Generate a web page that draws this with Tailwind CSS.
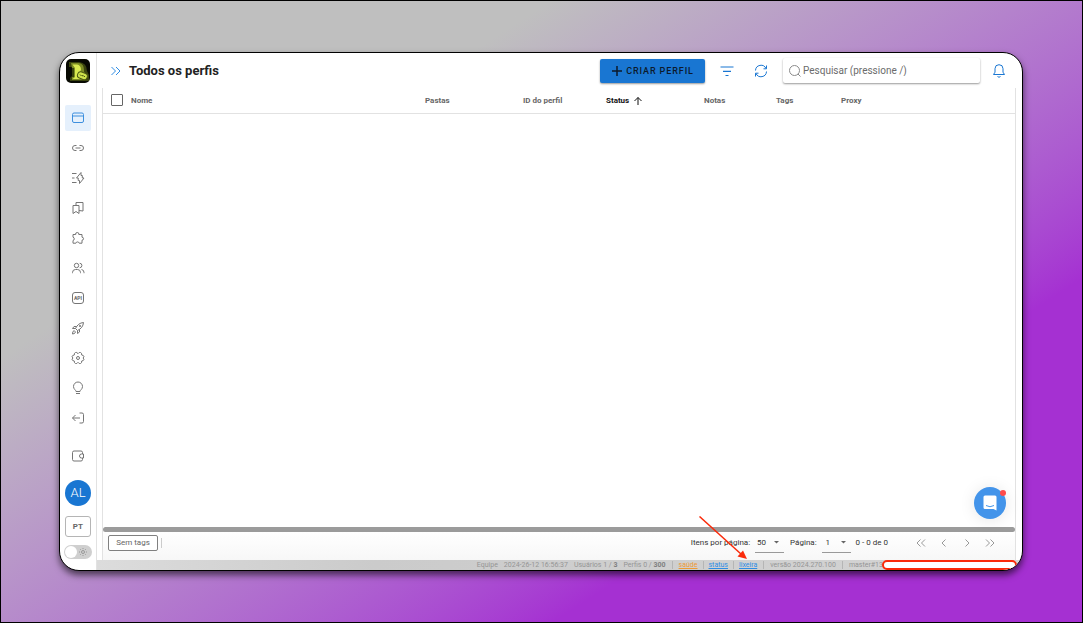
<!DOCTYPE html>
<html lang="pt-BR">
<head>
<meta charset="utf-8">
<meta name="viewport" content="width=device-width, initial-scale=1">
<title>Todos os perfis</title>
<script src="https://cdn.jsdelivr.net/npm/@tailwindcss/browser@4"></script>
</head>
<body class="flex h-screen border border-black bg-linear-147 from-[#bfbfbf] from-27% to-[#a530d2] to-74% py-[51px] pr-[59px] pl-[58px] font-['Roboto',sans-serif] text-[8px] leading-[10px] text-[#333]">
<div class="flex min-w-0 flex-1 overflow-hidden rounded-[20px] border border-black bg-white shadow-[0_4px_7px_rgba(0,0,0,0.6)]">

  <nav aria-label="Principal" class="flex w-[37px] shrink-0 flex-col items-center border-r border-[#e2e2e2] pt-1.5 text-[#757575]">
    <svg class="size-6 shrink-0" viewBox="0 0 24 24"><rect width="24" height="24" rx="5" fill="#080a02"/><path d="M3 3h10q8 1 8 9l2 4v6H4v-3l2-2V8H3z" fill="#3a440e"/><path d="M5 4h8q5 1 5 7v2l4 4-3 4H6v-3h2V9H6z" fill="#7c8d24"/><path d="M6.500 5.500H11q4 .5 4 5.500l-2 3 2 6H6.500L9 18V9z" fill="#d9ea50"/><rect x="11.500" y="13.500" width="10" height="6.500" rx="3" transform="rotate(22 16.500 16.500)" fill="#cfe34b" stroke="#4b5713"/><path d="M14 15.500l1.500 1.500m.5-1l1 1.500m.5-1l1.500 1.500" stroke="#4b5713" fill="none"/></svg>
    <div class="mt-[22px] flex flex-col items-center gap-1">
      <a href="#" aria-label="Perfis" class="flex size-[26px] items-center justify-center rounded-xs bg-[#e5f0fc] text-[#3d8fde]"><svg class="size-4" viewBox="0 0 16 16" fill="none" stroke="currentColor"><rect x="2.500" y="3" width="11" height="9.500" rx="1.500"/><path d="M2.500 6h11"/></svg></a>
      <a href="#" aria-label="Proxies" class="flex size-[26px] items-center justify-center"><svg class="size-4" viewBox="0 0 16 16" fill="none" stroke="currentColor"><path d="M6.500 5.500H5a2.500 2.500 0 0 0 0 5h1.500M9.500 5.500H11a2.500 2.500 0 0 1 0 5H9.500M5.500 8h5"/></svg></a>
      <a href="#" aria-label="Automação" class="flex size-[26px] items-center justify-center"><svg class="size-4" viewBox="0 0 16 16" fill="none" stroke="currentColor" stroke-linejoin="round"><path d="M2 3.500h4.500M2 8h2.500M2 12.500h4.500M11 2.500L6.500 8h1.700v2.500h1.300v3L14 8h-1.700V5.500H11z"/></svg></a>
      <a href="#" aria-label="Favoritos" class="flex size-[26px] items-center justify-center"><svg class="size-4" viewBox="0 0 16 16" fill="none" stroke="currentColor" stroke-linejoin="round"><path d="M3 5.500h6v8L6 11.500l-3 2zM6 5.500v-3h7v8.500l-4-.5"/></svg></a>
      <a href="#" aria-label="Extensões" class="flex size-[26px] items-center justify-center"><svg class="size-4" viewBox="0 0 16 16" fill="none" stroke="currentColor" stroke-linejoin="round"><path d="M3 4.500h2.700a1.600 1.600 0 1 1 3.100 0H12v2.700a1.500 1.500 0 1 1 0 3v3H9.200a1.700 1.700 0 0 0-3.300 0H3V10.500a1.700 1.700 0 0 0 0-3.300z"/></svg></a>
      <a href="#" aria-label="Equipe" class="flex size-[26px] items-center justify-center"><svg class="size-4" viewBox="0 0 16 16" fill="none" stroke="currentColor"><circle cx="6.500" cy="5.500" r="2.200"/><path d="M9.700 3.300a2.200 2.200 0 1 1 0 4.400M2.500 13.200v-.7a3 3 0 0 1 3-3h2a3 3 0 0 1 3 3v.7M11.500 9.500a3 3 0 0 1 2.500 3v.7"/></svg></a>
      <a href="#" aria-label="API" class="flex size-[26px] items-center justify-center"><svg class="size-4" viewBox="0 0 16 16" fill="none" stroke="currentColor"><rect x="2.500" y="2.500" width="11" height="11" rx="2.500"/><text x="8" y="9.800" text-anchor="middle" font-size="5" font-weight="900" fill="currentColor" stroke="none">API</text></svg></a>
      <a href="#" aria-label="Início rápido" class="flex size-[26px] items-center justify-center"><svg class="size-4" viewBox="0 0 16 16" fill="none" stroke="currentColor" stroke-linejoin="round"><path d="M5.500 8.500Q8 3 13.500 2.500 13 8 7.500 10.500zM6.500 6.500H4L2.500 8.500l3 0M9.500 9.500V12l-2 1.500v-3M4 10.500l1.500 1.500-1 1.500-2 .5.300-2z"/><circle cx="10" cy="6" r=".7"/></svg></a>
      <a href="#" aria-label="Configurações" class="flex size-[26px] items-center justify-center"><svg class="size-4" viewBox="0 0 16 16" fill="none" stroke="currentColor" stroke-linejoin="round"><path d="M5.500 2.500h1.300L8 3.700l1.200-1.200h1.300l1 .8.200 1.700 1.600.5.700 1.300L13 8l1 1.200-.7 1.300-1.600.5-.2 1.700-1 .8H9.200L8 12.300l-1.200 1.200H5.500l-1-.8-.2-1.700-1.600-.5L2 9.200 3 8 2 6.800l.7-1.300L4.300 5l.2-1.700z"/><circle cx="8" cy="8" r="1.500"/></svg></a>
      <a href="#" aria-label="Dicas" class="flex size-[26px] items-center justify-center"><svg class="size-4" viewBox="0 0 16 16" fill="none" stroke="currentColor"><path d="M6 11.500C6 10 3.500 9.300 3.500 6.500a4.500 4.500 0 0 1 9 0c0 2.800-2.500 3.500-2.500 5zM6 13.500h4"/></svg></a>
      <a href="#" aria-label="Sair" class="flex size-[26px] items-center justify-center"><svg class="size-4" viewBox="0 0 16 16" fill="none" stroke="currentColor"><path d="M9.500 3H12q1.500 0 1.500 1.500v7Q13.500 13 12 13H9.500M2.500 8h7.500M5.500 5l-3 3 3 3"/></svg></a>
    </div>
    <a href="#" aria-label="Carteira" class="mt-3 flex size-[26px] items-center justify-center"><svg class="size-4" viewBox="0 0 16 16" fill="none" stroke="currentColor"><path d="M12.500 6V4.500Q12.500 3 11 3H4Q2.500 3 2.500 4.500v7Q2.500 13 4 13h7q1.500 0 1.500-1.500V10"/><path d="M13.500 6h-2a2 2 0 0 0 0 4h2z"/></svg></a>
    <button class="mt-[11px] size-[26px] shrink-0 rounded-full bg-[#1976d2] text-[13px] font-light text-white">AL</button>
    <button class="mt-2.5 h-[21px] w-[26px] shrink-0 rounded-[3px] border border-[#b5b5b5] text-[8px] font-bold tracking-wide text-[#666]">PT</button>
    <label class="relative mt-2 block h-3.5 w-7 shrink-0 rounded-full bg-[#cfcfcf]">
      <input type="checkbox" aria-label="Tema" class="absolute top-px left-px size-3 appearance-none rounded-full bg-white">
      <svg class="absolute top-0.5 right-1 size-2.5" viewBox="0 0 10 10" fill="none" stroke="#999"><circle cx="5" cy="5" r="1.500"/><path d="M5 1v1M5 8v1M1 5h1M8 5h1M2.200 2.200l.7.7M7.100 7.100l.7.7M2.200 7.800l.7-.7M7.100 2.900l.7-.7"/></svg>
    </label>
  </nav>

  <div class="flex min-w-0 flex-1 flex-col">
    <header class="flex h-[35px] shrink-0 items-center pr-4 pl-3">
      <button aria-label="Expandir menu" class="text-[#2f8de4]"><svg class="size-3.5" viewBox="0 0 14 14" fill="none" stroke="currentColor"><path d="M2.500 3l4 4-4 4M7 3l4 4-4 4"/></svg></button>
      <h1 class="ml-1.5 text-[13px] leading-4 font-bold text-[#222]">Todos os perfis</h1>
      <button class="ml-auto flex h-6 w-[105px] items-center justify-center gap-[3px] rounded-xs bg-[#1976d2] text-[9px] font-medium tracking-widest text-[#0c1a2b] shadow-[0_1px_2px_rgba(0,0,0,0.4)]"><svg class="size-3" viewBox="0 0 12 12" fill="none" stroke="currentColor" stroke-width="1.500"><path d="M6 1v10M1 6h10"/></svg>CRIAR PERFIL</button>
      <button aria-label="Filtrar" class="ml-3.5 text-[#1976d2]"><svg class="size-4" viewBox="0 0 16 16" fill="none" stroke="currentColor" stroke-width="1.200"><path d="M1.500 4h13M4 8.300h8M6.500 12.500h3"/></svg></button>
      <button aria-label="Atualizar" class="ml-[19px] text-[#1976d2]"><svg class="size-3.5" viewBox="0 0 14 14" fill="none" stroke="currentColor"><path d="M1.500 6.500A5.500 5.500 0 0 1 12 4.500M12.500 7.500A5.500 5.500 0 0 1 2 9.500M12.500 1.500v3.300H9.500M1.500 12.500V9.200h3"/></svg></button>
      <label class="ml-[15px] flex h-[25px] w-[197px] items-center gap-px rounded-xs bg-white pl-[5px] shadow-[0_1px_2px_rgba(0,0,0,0.4)]">
        <svg class="size-3.5 shrink-0" viewBox="0 0 14 14" fill="none" stroke="#8a8a8a"><circle cx="6.500" cy="6.500" r="5"/><path d="M10 10l2.500 2.500"/></svg>
        <input type="search" aria-label="Pesquisar" placeholder="Pesquisar (pressione /)" class="min-w-0 flex-1 text-[10px] leading-4 outline-none placeholder:text-[#6b6b6b]">
      </label>
      <button aria-label="Notificações" class="ml-3 text-[#1976d2]"><svg class="size-3.5" viewBox="0 0 14 14" fill="none" stroke="currentColor" stroke-linejoin="round"><path d="M7 .7a4 4 0 0 1 4 4v3.500l1.500 2.300h-11L3 8.200V4.700a4 4 0 0 1 4-4zM5.500 12.500q1.500 1.500 3 0"/></svg></button>
    </header>

    <main class="mr-1.5 ml-[5px] flex min-h-0 flex-1 flex-col border-x border-[#e2e2e2]">
      <div class="flex-1">
        <table class="w-full table-fixed border-collapse text-left text-[#666]">
          <colgroup><col class="w-7"><col><col class="w-[98px]"><col class="w-[83px]"><col class="w-[98px]"><col class="w-[72px]"><col class="w-[65px]"><col class="w-[174px]"></colgroup>
          <thead>
            <tr class="h-[25px] border-b border-[#e2e2e2]">
              <th class="pl-2"><input type="checkbox" aria-label="Selecionar todos" class="block size-3 appearance-none rounded-[1px] border border-[#666] bg-white"></th>
              <th class="pt-0.5">Nome</th><th class="pt-0.5">Pastas</th><th class="pt-0.5">ID do perfil</th>
              <th class="pt-0.5 text-[#111]"><span class="flex items-center gap-1">Status <svg class="size-2.5" viewBox="0 0 10 10" fill="none" stroke="currentColor"><path d="M5 9V1.500M1.500 5L5 1.500 8.500 5"/></svg></span></th>
              <th class="pt-0.5">Notas</th><th class="pt-0.5">Tags</th><th class="pt-0.5">Proxy</th>
            </tr>
          </thead>
          <tbody></tbody>
        </table>
      </div>
      <div class="h-[5px] shrink-0 rounded-full bg-[#9b9b9b]"></div>
      <div class="flex h-7 shrink-0 items-center bg-linear-to-b from-white to-[#f7f7f7] pb-1.5 pl-[5px]">
        <button class="h-4 w-[50px] rounded-xs border border-[#808080] bg-white text-[#666]">Sem tags</button>
        <span class="ml-[3px] h-2.5 w-px bg-[#ccc]"></span>
        <label for="per-page" class="ml-auto">Itens por página:</label>
        <div class="relative ml-[5px] flex h-5 w-[29px] items-center border-b border-[#999]">
          <select id="per-page" class="w-full appearance-none bg-transparent pl-0.5"><option>50</option></select>
          <svg class="pointer-events-none absolute right-[5px] h-[3px] w-[5px]" viewBox="0 0 5 3"><path d="M0 0h5L2.500 2.500z" fill="#666"/></svg>
        </div>
        <label for="page" class="ml-1.5">Página:</label>
        <div class="relative ml-[5px] flex h-5 w-[29px] items-center border-b border-[#999]">
          <select id="page" class="w-full appearance-none bg-transparent pl-1"><option>1</option></select>
          <svg class="pointer-events-none absolute right-[5px] h-[3px] w-[5px]" viewBox="0 0 5 3"><path d="M0 0h5L2.500 2.500z" fill="#666"/></svg>
        </div>
        <span class="ml-[5px]">0 - 0 de 0</span>
        <div class="mr-[19px] ml-[27px] flex gap-[11px] text-[#999]">
          <button aria-label="Primeira página"><svg class="size-3" viewBox="0 0 12 12" fill="none" stroke="currentColor"><path d="M5.500 2.500L2 6l3.500 3.500M10 2.500L6.500 6 10 9.500"/></svg></button>
          <button aria-label="Página anterior"><svg class="size-3" viewBox="0 0 12 12" fill="none" stroke="currentColor"><path d="M7.500 2.500L4 6l3.500 3.500"/></svg></button>
          <button aria-label="Próxima página"><svg class="size-3" viewBox="0 0 12 12" fill="none" stroke="currentColor"><path d="M4.500 2.500L8 6 4.500 9.500"/></svg></button>
          <button aria-label="Última página"><svg class="size-3" viewBox="0 0 12 12" fill="none" stroke="currentColor"><path d="M2 2.500L5.500 6 2 9.500M6.500 2.500L10 6 6.500 9.500"/></svg></button>
        </div>
      </div>
    </main>

    <footer class="flex h-2.5 shrink-0 items-center justify-end bg-linear-to-r from-[#dcdcdc] via-[#cbcbcb] via-30% to-[#d4d4d4] pr-[5px] text-[7px] whitespace-nowrap text-[#959595]">
      <span>Equipe</span>
      <span class="ml-1.5">2024-26-12 16:56:37</span>
      <span class="ml-1.5">Usuários 1 / <b class="text-[#808080]">3</b></span>
      <span class="ml-1.5">Perfis 0 / <b class="text-[#808080]">300</b></span>
      <span class="mx-1.5 h-2 w-px bg-[#b5b5b5]"></span>
      <a href="#" class="text-[#ee9a35] underline">saúde</a>
      <span class="mx-[5px] h-2 w-px bg-[#b5b5b5]"></span>
      <a href="#" class="text-[#2f8de4] underline">status</a>
      <span class="mx-[5px] h-2 w-px bg-[#b5b5b5]"></span>
      <a href="#" class="relative text-[#2f8de4] underline">lixeira<svg class="pointer-events-none absolute right-2.5 bottom-full h-11 w-12" viewBox="0 0 48 44" fill="none"><path d="M.5.500L42 38" stroke="#fa2a0a" stroke-width="1.500"/><path d="M48 43l-9.500-2.500 5.500-6z" fill="#fa2a0a"/></svg></a>
      <span class="mx-1.5 h-2 w-px bg-[#b5b5b5]"></span>
      <span>versão 2024.270.100</span>
      <span class="mx-1.5 h-2 w-px bg-[#b5b5b5]"></span>
      <span>master#13</span>
      <span class="relative -mt-px -ml-px h-2.5 w-[135px] rounded-[5px] border-2 border-[#fa2a0a] bg-white"></span>
    </footer>
  </div>
</div>

<button aria-label="Abrir chat" class="fixed right-[77px] bottom-[104px] flex size-8 items-center justify-center rounded-full bg-[#4394ea] shadow-[0_1px_16px_rgba(0,0,0,0.1)]">
  <svg class="size-4" viewBox="0 0 16 16"><path d="M3 .5h10q1.500 0 1.500 1.500v13.500l-3-1.500H3q-1.500 0-1.500-1.500V2Q1.500.5 3 .5z" fill="#fff"/><path d="M4 10.500q4 2.500 8 0" fill="none" stroke="#4394ea"/></svg>
  <span class="absolute top-[3px] right-0 size-1.5 rounded-full bg-[#ff4b4b]"></span>
</button>
</body>
</html>
